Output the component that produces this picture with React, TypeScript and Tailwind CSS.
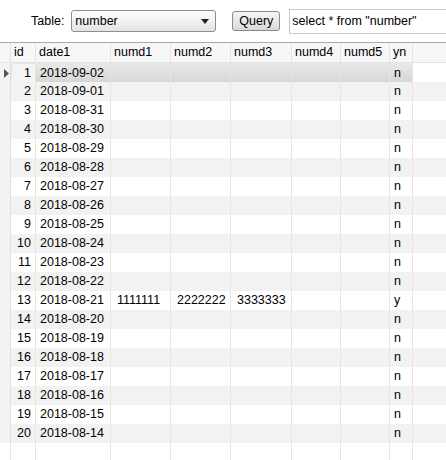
const rows = [
  "2018-09-02", "2018-09-01", "2018-08-31", "2018-08-30", "2018-08-29",
  "2018-08-28", "2018-08-27", "2018-08-26", "2018-08-25", "2018-08-24",
  "2018-08-23", "2018-08-22", "2018-08-21", "2018-08-20", "2018-08-19",
  "2018-08-18", "2018-08-17", "2018-08-16", "2018-08-15", "2018-08-14",
]

const cols = "grid grid-cols-[11px_25px_75px_60px_60px_61px_49px_49px_23px_1fr]"
const headers = ["id", "date1", "numd1", "numd2", "numd3", "numd4", "numd5", "yn"]

export default function App() {
  return (
    <div className="w-[446px] h-[460px] overflow-hidden bg-white text-[12.5px] text-black font-['Liberation_Sans',Arial,sans-serif]">
      {/* toolbar */}
      <div className="h-[42px] flex items-center">
        <span className="ml-[31px] mr-[7px]">Table:</span>
        <div className="w-[145px] h-[22px] flex items-center justify-between rounded-[3px] border border-[#8e8e8e] bg-gradient-to-b from-[#ffffff] to-[#e3e3e3] pl-[3px] pr-[6px]">
          <span>number</span>
          <svg width="8" height="5" viewBox="0 0 8 5">
            <path d="M0 0h8L4 5z" fill="#222" />
          </svg>
        </div>
        <button className="ml-[16px] w-[48px] h-[20px] rounded-[3px] border border-[#8a8a8a] bg-gradient-to-b from-[#f6f6f6] to-[#d9d9d9] leading-none">
          Query
        </button>
        <div className="ml-[9px] flex-1 h-[25px] border border-[#c8c8c8] border-r-0 flex items-center pl-[2px] whitespace-nowrap">
          select * from "number"
        </div>
      </div>

      {/* grid */}
      <div className="border-t border-[#a9a9a9]">
        <div className={`${cols} h-[20px] bg-[#f7f7f7] border-b border-[#e4e4e4]`}>
          <div className="border-r border-[#e4e4e4]" />
          {headers.map((h) => (
            <div key={h} className="border-r border-[#e4e4e4] pl-[3px] flex items-center">
              {h}
            </div>
          ))}
          <div />
        </div>

        {rows.map((d, i) => {
          const sel = i === 0
          const alt = i % 2 === 1
          const bg = sel
            ? "bg-gradient-to-b from-[#e9e9e9] to-[#d5d5d5]"
            : alt
            ? "bg-[#f2f2f2]"
            : "bg-white"
          const special = i === 12
          const vals = special ? ["1111111", "2222222", "3333333", "", ""] : ["", "", "", "", ""]
          return (
            <div key={d} className={`${cols} h-[19px] border-b border-[#ebebeb]`}>
              <div className="bg-[#f3f3f3] border-r border-[#e0e0e0] flex items-center pl-[4px]">
                {sel && (
                  <svg width="5" height="9" viewBox="0 0 5 9">
                    <path d="M0 0l5 4.5L0 9z" fill="#555" />
                  </svg>
                )}
              </div>
              <div
                className={`flex items-center justify-end pr-[4px] border-r border-[#e6e6e6] ${
                  sel ? "bg-[#f4f4f4] border border-[#d0d0d0] rounded-[2px]" : alt ? "bg-[#f2f2f2]" : "bg-white"
                }`}
              >
                {i + 1}
              </div>
              <div className={`${bg} border-r border-[#e6e6e6] flex items-center pl-[4px]`}>{d}</div>
              {vals.map((v, j) => (
                <div key={j} className={`${bg} border-r border-[#e6e6e6] flex items-center pl-[6px]`}>
                  {v}
                </div>
              ))}
              <div className={`${bg} border-r border-[#e6e6e6] flex items-center pl-[4px]`}>
                {special ? "y" : "n"}
              </div>
              <div className={sel ? "bg-white" : alt ? "bg-[#f2f2f2]" : "bg-white"} />
            </div>
          )
        })}

        <div className={`${cols} h-[20px]`}>
          {Array.from({ length: 10 }).map((_, k) => (
            <div key={k} className={k < 9 ? "border-r border-[#e6e6e6]" : ""} />
          ))}
        </div>
      </div>
    </div>
  )
}
